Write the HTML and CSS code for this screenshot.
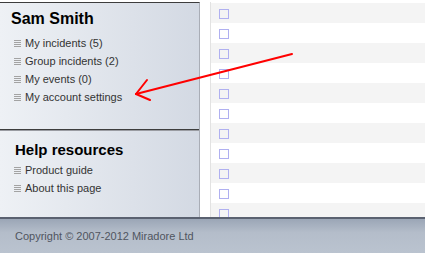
FILE: index.html
```html
<!DOCTYPE html>
<html lang="en">
<head>
    <meta charset="UTF-8">
    <title>My incidents</title>
    <link rel="stylesheet" href="styles.css">
</head>
<body>
<div class="page">
    <div class="main">
        <div class="sidebar">
            <div class="box box-user">
                <h2>Sam Smith</h2>
                <ul class="links">
                    <li><span class="bullet"></span>My incidents (5)</li>
                    <li><span class="bullet"></span>Group incidents (2)</li>
                    <li><span class="bullet"></span>My events (0)</li>
                    <li><span class="bullet"></span>My account settings</li>
                </ul>
            </div>
            <div class="box box-help">
                <h2>Help resources</h2>
                <ul class="links">
                    <li><span class="bullet"></span>Product guide</li>
                    <li><span class="bullet"></span>About this page</li>
                </ul>
            </div>
        </div>
        <div class="gutter"></div>
        <div class="grid">
            <div class="row odd"><span class="check"></span></div>
            <div class="row"><span class="check"></span></div>
            <div class="row odd"><span class="check"></span></div>
            <div class="row"><span class="check"></span></div>
            <div class="row odd"><span class="check"></span></div>
            <div class="row"><span class="check"></span></div>
            <div class="row odd"><span class="check"></span></div>
            <div class="row"><span class="check"></span></div>
            <div class="row odd"><span class="check"></span></div>
            <div class="row"><span class="check"></span></div>
            <div class="row odd"><span class="check"></span></div>
        </div>
    </div>
    <div class="footer">Copyright &copy; 2007-2012 Miradore Ltd</div>

    <svg class="arrow" width="425" height="253" viewBox="0 0 425 253">
        <g stroke="#ff0000" stroke-width="2" stroke-linecap="round" fill="none">
            <line x1="292" y1="54" x2="136" y2="94"/>
            <line x1="136" y1="94" x2="147" y2="80"/>
            <line x1="136" y1="94" x2="150" y2="100"/>
        </g>
    </svg>
</div>
</body>
</html>
```

FILE: styles.css
```css
body {
    margin: 0;
    font-family: "Liberation Sans", Arial, sans-serif;
    background: #fff;
}

.page {
    position: relative;
    width: 425px;
    height: 253px;
    overflow: hidden;
}

.main {
    display: flex;
    height: 217px;
    padding-top: 2px;
    box-sizing: border-box;
}

.sidebar {
    width: 200px;
    border-top: 1px solid #3d3d3d;
    border-right: 1px solid #a9adb6;
    box-sizing: border-box;
    display: flex;
    flex-direction: column;
    background: linear-gradient(to right, #eef1f5, #d3d9e3);
}

.box {
    box-sizing: border-box;
}

.box-user {
    height: 127px;
    padding-top: 6px;
    border-bottom: 1px solid #3d3d3d;
}

.box-help {
    flex: 1;
    padding-top: 9px;
    border-top: 1px solid #9a9ca2;
}

h2 {
    margin: 0;
    font-size: 16px;
    line-height: 20px;
    color: #000;
}

.box-user h2 {
    padding-left: 11px;
    margin-bottom: 5px;
}

.box-help h2 {
    padding-left: 15px;
    font-size: 15px;
    margin-bottom: 1px;
}

.links {
    list-style: none;
    margin: 0;
    padding: 0 0 0 14px;
}

.links li {
    display: flex;
    align-items: center;
    height: 18px;
    font-size: 11px;
    color: #333;
}

.bullet {
    width: 7px;
    height: 7px;
    margin: 1px 4px 0 0;
    background: repeating-linear-gradient(to bottom, #a3a3a3 0 1px, transparent 1px 2px);
}

.gutter {
    width: 11px;
    border-right: 1px solid #e2e2e2;
    box-sizing: border-box;
}

.grid {
    flex: 1;
    padding-top: 1px;
    overflow: hidden;
}

.row {
    height: 20px;
    padding: 6px 0 0 8px;
    box-sizing: border-box;
}

.row.odd {
    background: #f4f4f4;
}

.check {
    display: block;
    width: 10px;
    height: 10px;
    border: 1px solid #b0b0f0;
    box-sizing: border-box;
}

.footer {
    height: 36px;
    border-top: 2px solid #5a6170;
    box-sizing: border-box;
    padding: 11px 0 0 15px;
    font-size: 11px;
    line-height: 13px;
    color: #50555f;
    background: linear-gradient(to bottom, #9ba6b6, #b4bdca 40%, #bac3cf);
}

.arrow {
    position: absolute;
    left: 0;
    top: 0;
}
```
